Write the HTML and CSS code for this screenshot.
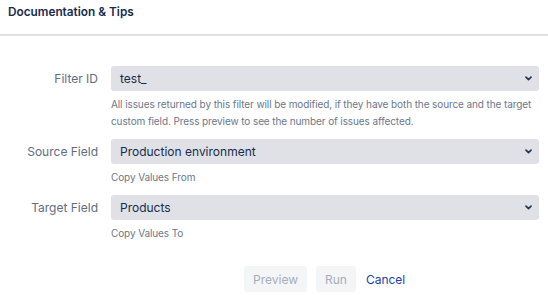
FILE: index.html
```html
<!DOCTYPE html>
<html lang="en">
<head>
    <meta charset="UTF-8">
    <meta name="viewport" content="width=device-width, initial-scale=1.0">
    <title>Documentation &amp; Tips</title>
    <link rel="stylesheet" href="styles.css">
</head>
<body>
    <div class="header">
        <h2>Documentation &amp; Tips</h2>
    </div>

    <form class="copy-form">
        <label class="field-label" for="filter-id">Filter ID</label>
        <div class="field">
            <div class="select" id="filter-id">
                <span>test_</span>
                <svg class="chevron" width="7" height="5" viewBox="0 0 7 5"><path d="M1 1.2l2.5 2.5 2.5-2.5" fill="none" stroke="#253858" stroke-width="1.7" stroke-linecap="round" stroke-linejoin="round"/></svg>
            </div>
            <div class="help">All issues returned by this filter will be modified, if they have both the source and the target custom field. Press preview to see the number of issues affected.</div>
        </div>

        <label class="field-label" for="source-field">Source Field</label>
        <div class="field">
            <div class="select" id="source-field">
                <span>Production environment</span>
                <svg class="chevron" width="7" height="5" viewBox="0 0 7 5"><path d="M1 1.2l2.5 2.5 2.5-2.5" fill="none" stroke="#253858" stroke-width="1.7" stroke-linecap="round" stroke-linejoin="round"/></svg>
            </div>
            <div class="help">Copy Values From</div>
        </div>

        <label class="field-label" for="target-field">Target Field</label>
        <div class="field">
            <div class="select" id="target-field">
                <span>Products</span>
                <svg class="chevron" width="7" height="5" viewBox="0 0 7 5"><path d="M1 1.2l2.5 2.5 2.5-2.5" fill="none" stroke="#253858" stroke-width="1.7" stroke-linecap="round" stroke-linejoin="round"/></svg>
            </div>
            <div class="help">Copy Values To</div>
        </div>

        <div class="actions">
            <button type="button" class="btn" disabled>Preview</button>
            <button type="button" class="btn" disabled>Run</button>
            <button type="button" class="btn-link">Cancel</button>
        </div>
    </form>
</body>
</html>
```

FILE: styles.css
```css
body {
    font-family: Inter, "Noto Sans", sans-serif;
    margin: 0;
    padding: 0;
    background-color: #fff;
    color: #172b4d;
}

.header {
    height: 34px;
    border-bottom: 2px solid #dfe1e6;
    padding: 0 8px;
}

.header h2 {
    margin: 0;
    padding-top: 3px;
    font-size: 11.8px;
    font-weight: 600;
    line-height: 18px;
    color: #172b4d;
}

.copy-form {
    display: grid;
    grid-template-columns: 98px 1fr;
    column-gap: 13px;
    padding: 30px 9px 0 0;
}

.field-label {
    text-align: right;
    font-size: 12px;
    line-height: 25px;
    color: #5e6c84;
}

.field {
    margin-bottom: 9px;
}

.select {
    display: flex;
    align-items: center;
    justify-content: space-between;
    height: 25px;
    padding: 0 7px 0 9px;
    background-color: #dfe1e6;
    border-radius: 3px;
    font-size: 12px;
    color: #172b4d;
}

.help {
    margin-top: 5px;
    font-size: 10px;
    letter-spacing: -0.1px;
    line-height: 17px;
    color: #6b778c;
}

.actions {
    grid-column: 2;
    display: flex;
    align-items: center;
    gap: 9px;
    margin-top: 15px;
    padding-left: 133px;
}

.btn {
    height: 26px;
    padding: 0 9px;
    font-family: inherit;
    font-size: 12px;
    border: none;
    border-radius: 3px;
    background-color: #f4f5f7;
    color: #a5adba;
}

.btn-link {
    padding: 0 1px;
    font-family: inherit;
    font-size: 12px;
    border: none;
    background: none;
    color: #1c3fa8;
    cursor: pointer;
}
```
